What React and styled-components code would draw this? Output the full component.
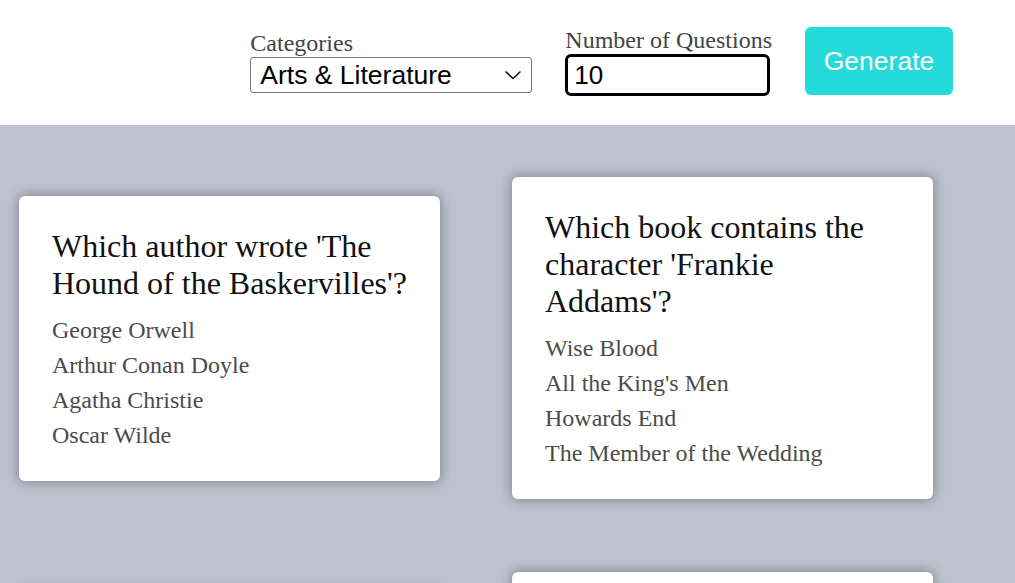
import React from "react";
import styled, { createGlobalStyle } from "styled-components";

const GlobalStyle = createGlobalStyle`
  html, body { margin: 0; padding: 0; scrollbar-width: none; }
  html::-webkit-scrollbar, body::-webkit-scrollbar { display: none; }
  body {
    background: #bcc2ce;
    font-family: "Liberation Serif", "Times New Roman", serif;
  }
`;

const Header = styled.header`
  height: 125px;
  box-sizing: border-box;
  padding: 0 62px 3px 0;
  background: #ffffff;
  display: flex;
  align-items: center;
  justify-content: flex-end;
  gap: 33px;
`;

const Field = styled.label`
  display: flex;
  flex-direction: column;
`;

const FieldLabel = styled.span`
  font-family: "Liberation Serif", "Times New Roman", serif;
  font-size: 24px;
  line-height: 28px;
  color: #444444;
`;

const chevron = encodeURIComponent(
  `<svg xmlns="http://www.w3.org/2000/svg" width="18" height="10" viewBox="0 0 18 10"><polyline points="1.5,1.5 9,8.5 16.5,1.5" fill="none" stroke="#111" stroke-width="1.6"/></svg>`
);

const Select = styled.select`
  appearance: none;
  -webkit-appearance: none;
  width: 282px;
  height: 36px;
  box-sizing: border-box;
  border: 1px solid #767676;
  border-radius: 3px;
  background: #fff url("data:image/svg+xml,${chevron}") no-repeat right 9px center;
  padding: 0 30px 0 9px;
  font-family: "Liberation Sans", Arial, sans-serif;
  font-size: 26.5px;
  color: #000;
  outline: none;
`;

const NumberInput = styled.input`
  width: 205px;
  height: 42px;
  box-sizing: border-box;
  border: 3px solid #000;
  border-radius: 6px;
  padding: 0 6px;
  font-family: "Liberation Sans", Arial, sans-serif;
  font-size: 26px;
  color: #000;
  outline: none;
  -moz-appearance: textfield;
  &::-webkit-outer-spin-button,
  &::-webkit-inner-spin-button { -webkit-appearance: none; margin: 0; }
`;

const GenerateButton = styled.button`
  width: 148px;
  height: 68px;
  border: none;
  border-radius: 6px;
  background: #24dadb;
  color: #ffffff;
  font-family: "Liberation Sans", Arial, sans-serif;
  font-size: 26.5px;
  cursor: pointer;
`;

const Grid = styled.main`
  display: grid;
  grid-template-columns: 421px 421px;
  column-gap: 72px;
  row-gap: 73px;
  align-items: center;
  padding: 52px 0 40px 19px;
`;

const Card = styled.article`
  background: #ffffff;
  border-radius: 6px;
  box-shadow: 0 0 12px 1px rgba(0, 0, 0, 0.32);
  padding: 32px 33px 28px;
`;

const Question = styled.h2`
  margin: 0 0 11px;
  font-family: "Liberation Serif", "Times New Roman", serif;
  font-weight: normal;
  font-size: 32px;
  line-height: 37px;
  color: #111111;
`;

const Options = styled.ul`
  list-style: none;
  margin: 0;
  padding: 0;
`;

const Option = styled.li`
  font-family: "Liberation Serif", "Times New Roman", serif;
  font-size: 24px;
  line-height: 35px;
  color: #4b4b4b;
`;

const questions = [
  {
    q: "Which author wrote 'The Hound of the Baskervilles'?",
    a: ["George Orwell", "Arthur Conan Doyle", "Agatha Christie", "Oscar Wilde"],
  },
  {
    q: "Which book contains the character 'Frankie Addams'?",
    a: ["Wise Blood", "All the King's Men", "Howards End", "The Member of the Wedding"],
  },
  {
    q: "Who painted 'The Starry Night'?",
    a: ["Claude Monet", "Vincent van Gogh", "Pablo Picasso", "Salvador Dalí"],
  },
  {
    q: "Which playwright wrote the tragedy 'A Streetcar Named Desire'?",
    a: ["Arthur Miller", "Tennessee Williams", "Eugene O'Neill", "Edward Albee"],
  },
];

export default function App() {
  return (
    <>
      <GlobalStyle />
      <Header>
        <Field>
          <FieldLabel>Categories</FieldLabel>
          <Select defaultValue="arts">
            <option value="arts">Arts &amp; Literature</option>
            <option value="film">Film &amp; TV</option>
            <option value="history">History</option>
          </Select>
        </Field>
        <Field>
          <FieldLabel>Number of Questions</FieldLabel>
          <NumberInput type="number" defaultValue="10" />
        </Field>
        <GenerateButton>Generate</GenerateButton>
      </Header>
      <Grid>
        {questions.map((item) => (
          <Card key={item.q}>
            <Question>{item.q}</Question>
            <Options>
              {item.a.map((o) => (
                <Option key={o}>{o}</Option>
              ))}
            </Options>
          </Card>
        ))}
      </Grid>
    </>
  );
}
